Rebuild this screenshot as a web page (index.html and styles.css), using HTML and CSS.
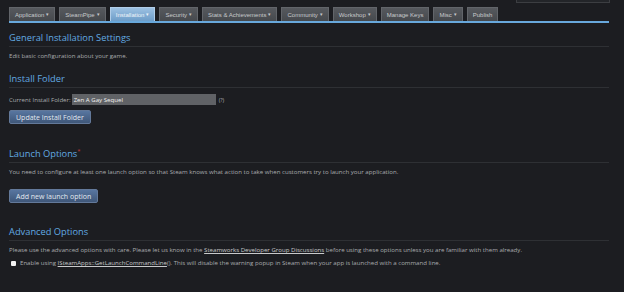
FILE: index.html
```html
<!DOCTYPE html>
<html>
<head>
<meta charset="utf-8">
<link rel="stylesheet" href="styles.css">
</head>
<body>
<div class="page">
  <div class="topbox"></div>
  <nav class="tabs">
    <span class="tab">Application <i>▾</i></span>
    <span class="tab">SteamPipe <i>▾</i></span>
    <span class="tab active">Installation <i>▾</i></span>
    <span class="tab">Security <i>▾</i></span>
    <span class="tab">Stats &amp; Achievements <i>▾</i></span>
    <span class="tab">Community <i>▾</i></span>
    <span class="tab">Workshop <i>▾</i></span>
    <span class="tab">Manage Keys</span>
    <span class="tab">Misc <i>▾</i></span>
    <span class="tab">Publish</span>
  </nav>

  <section class="sec sec-general">
    <h2 class="heading">General Installation Settings</h2>
    <p class="desc">Edit basic configuration about your game.</p>
  </section>

  <section class="sec sec-folder">
    <h2 class="heading">Install Folder</h2>
    <div class="field">
      <span class="label">Current Install Folder:</span>
      <span class="input">Zen A Gay Sequel</span>
      <span class="help">(?)</span>
    </div>
    <button class="btn">Update Install Folder</button>
  </section>

  <section class="sec sec-launch">
    <h2 class="heading">Launch Options<sup class="req">*</sup></h2>
    <p class="desc">You need to configure at least one launch option so that Steam knows what action to take when customers try to launch your application.</p>
    <button class="btn btn-add">Add new launch option</button>
  </section>

  <section class="sec sec-adv">
    <h2 class="heading">Advanced Options</h2>
    <p class="desc">Please use the advanced options with care. Please let us know in the <a class="link">Steamworks Developer Group Discussions</a> before using these options unless you are familiar with them already.</p>
    <p class="check"><span class="box"></span>Enable using <a class="link">ISteamApps::GetLaunchCommandLine</a>(). This will disable the warning popup in Steam when your app is launched with a command line.</p>
  </section>
</div>
</body>
</html>
```
FILE: styles.css
```css
html, body {
  margin: 0;
  padding: 0;
  background: #1c1d21;
}
body {
  font-family: "Open Sans", "Liberation Sans", Arial, sans-serif;
  color: #a9abae;
  width: 624px;
  height: 292px;
  overflow: hidden;
}
.page {
  position: relative;
  padding: 7px 15px 0 9px;
}
.topbox {
  position: absolute;
  left: 516px;
  top: -3px;
  width: 92px;
  height: 4px;
  background: #232529;
  border: 1px solid #3c3e42;
}
.tabs {
  display: flex;
  gap: 4px;
  border-bottom: 2px solid #68a8dc;
  height: 14px;
}
.tab {
  display: flex;
  align-items: center;
  gap: 2px;
  height: 14px;
  padding: 0 5px;
  font-family: "Liberation Sans", Arial, sans-serif;
  font-size: 6px;
  color: #c8cacd;
  background: linear-gradient(#56595e, #46494d);
  border: 1px solid #62656a;
  border-bottom: none;
  box-sizing: border-box;
}
.tab i {
  font-style: normal;
  font-size: 4.5px;
}
.tab.active {
  background: linear-gradient(#9cc1e2, #6e9dc8);
  border-color: #b0cde8;
  color: #eef4fa;
}
.sec {
  display: flex;
  flex-direction: column;
  align-items: flex-start;
}
.heading {
  align-self: stretch;
  margin: 0;
  font-weight: normal;
  font-size: 9.3px;
  color: #62aae2;
  border-bottom: 1px solid #2e3034;
  padding-bottom: 2px;
  line-height: 12px;
}
.sec-general { margin-top: 9px; }
.sec-folder { margin-top: 13px; }
.sec-launch { margin-top: 24px; }
.sec-adv { margin-top: 23px; }
.desc {
  margin: 4px 0 0;
  font-size: 6.1px;
  line-height: 9px;
}
.req {
  color: #c33b3d;
  font-size: 6px;
  vertical-align: top;
  line-height: 6px;
}
.field {
  display: flex;
  align-items: center;
  gap: 1px;
  margin-top: 6px;
  font-size: 6.1px;
}
.input {
  width: 144px;
  height: 11px;
  padding-left: 2px;
  background: #606266;
  color: #f0f0f0;
  line-height: 11px;
  box-sizing: border-box;
}
.help {
  margin-left: 2px;
  font-size: 5.5px;
}
.btn {
  margin-top: 5px;
  height: 14px;
  padding: 0 6px;
  font-family: inherit;
  font-size: 7px;
  color: #e2e9f1;
  background: linear-gradient(#5876a0, #3f5779);
  border: 1px solid #63799a;
  border-radius: 2px;
}
.btn-add { margin-top: 13px; }
.link {
  color: #c8c9cb;
  text-decoration: underline;
}
.check {
  margin: 4px 0 0;
  font-size: 6.1px;
  line-height: 9px;
}
.box {
  display: inline-block;
  vertical-align: -0.5px;
  width: 5px;
  height: 5px;
  background: #f2f2f2;
  margin: 0 4px 0 2px;
  border-radius: 1px;
}
```
